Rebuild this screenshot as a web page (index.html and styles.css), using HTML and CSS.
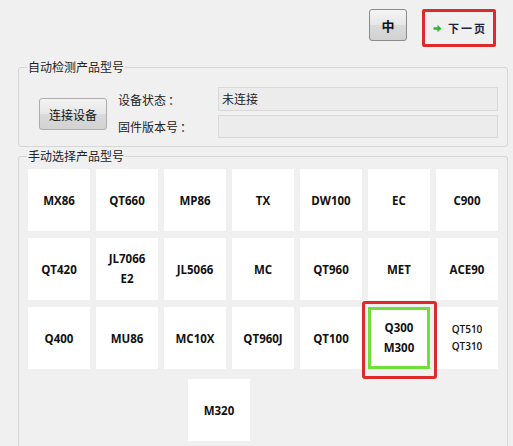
FILE: index.html
```html
<!DOCTYPE html>
<html lang="zh">
<head>
<meta charset="utf-8">
<title>产品型号</title>
<link rel="stylesheet" href="styles.css">
</head>
<body>
<div class="top">
  <button class="btn lang">中</button>
  <div class="next-wrap">
    <button class="next">
      <svg class="arrow" width="9" height="9" viewBox="0 0 9 9"><path d="M0.5 3.2h4V0.8L8.5 4.5 4.5 8.2V5.8h-4z" fill="#2fb52f"/></svg>
      <span>下一页</span>
    </button>
  </div>
</div>

<fieldset class="group auto">
  <legend>自动检测产品型号</legend>
  <div class="auto-body">
    <button class="btn connect">连接设备</button>
    <div class="fields">
      <div class="field"><span class="lbl">设备状态<span class="colon">：</span></span><div class="box">未连接</div></div>
      <div class="field"><span class="lbl">固件版本号<span class="colon">：</span></span><div class="box second"></div></div>
    </div>
  </div>
</fieldset>

<fieldset class="group manual">
  <legend>手动选择产品型号</legend>
  <div class="tiles">
    <div class="tile">MX86</div>
    <div class="tile">QT660</div>
    <div class="tile">MP86</div>
    <div class="tile">TX</div>
    <div class="tile">DW100</div>
    <div class="tile">EC</div>
    <div class="tile">C900</div>
    <div class="tile">QT420</div>
    <div class="tile two">JL7066<br>E2</div>
    <div class="tile">JL5066</div>
    <div class="tile">MC</div>
    <div class="tile">QT960</div>
    <div class="tile">MET</div>
    <div class="tile">ACE90</div>
    <div class="tile">Q400</div>
    <div class="tile">MU86</div>
    <div class="tile">MC10X</div>
    <div class="tile">QT960J</div>
    <div class="tile">QT100</div>
    <div class="tile two selected">Q300<br>M300<span class="hl"></span></div>
    <div class="tile small">QT510<br>QT310</div>
  </div>
  <div class="last-row">
    <div class="tile">M320</div>
  </div>
</fieldset>
</body>
</html>
```

FILE: styles.css
```css
html, body {
  margin: 0;
  padding: 0;
  background: #f0f0f0;
  width: 513px;
  height: 446px;
  overflow: hidden;
  font-family: "Noto Sans CJK SC", "Noto Sans", sans-serif;
  font-size: 12px;
  color: #1a1a1a;
}

.top {
  display: flex;
  justify-content: flex-end;
  align-items: flex-start;
  padding: 9px 17px 0 0;
  height: 47px;
  box-sizing: border-box;
  gap: 15px;
}

.btn {
  font-family: "Noto Sans CJK SC", sans-serif;
  border: 1px solid #adadad;
  border-radius: 3px;
  background: linear-gradient(#f4f4f4, #e6e6e6 50%, #dadada 51%, #d2d2d2);
  color: #111;
  padding: 0;
  margin: 0;
}

.lang {
  width: 38px;
  height: 32px;
  font-weight: bold;
  font-size: 13px;
  border-color: #8a8a8a;
}

.next-wrap {
  width: 74px;
  height: 38px;
  border: 3px solid #dd2a2a;
  border-radius: 2px;
  box-sizing: border-box;
}

.next {
  width: 100%;
  height: 100%;
  border: 0;
  background: #f0f0f0;
  display: flex;
  align-items: center;
  padding: 0 0 0 8px;
  gap: 6px;
  font-family: "Noto Sans CJK SC", sans-serif;
  font-size: 11px;
  font-weight: bold;
  color: #1c2340;
  letter-spacing: 2px;
}

.arrow { display: block; }

.group {
  margin: 0 5px 0 18px;
  padding: 0;
  border: 1px solid #d6d6d6;
  border-radius: 3px;
  box-sizing: border-box;
  width: 490px;
  min-width: 0;
}

.group legend {
  padding: 0 1px;
  margin-left: 8px;
  font-size: 12px;
  line-height: 14px;
  color: #222;
}

.auto {
  margin-top: 13px;
  height: 87px;
}

.auto-body {
  display: flex;
  align-items: flex-start;
  padding: 13px 0 0 20px;
}

.connect {
  width: 68px;
  height: 32px;
  margin-top: 11px;
  font-size: 12px;
}

.fields {
  margin-left: 11px;
  display: flex;
  flex-direction: column;
  gap: 4px;
}

.field {
  display: flex;
  align-items: center;
}

.lbl {
  width: 100px;
  font-size: 12px;
  color: #222;
}

.colon { margin-left: 2px; }

.box {
  width: 280px;
  height: 24px;
  box-sizing: border-box;
  border: 1px solid #d9d9d9;
  background: #ececec;
  padding: 0 3px;
  line-height: 22px;
  font-size: 12px;
  color: #222;
}

.box.second { height: 23px; }

.manual {
  margin-top: 2px;
  height: 300px;
}

.tiles {
  display: grid;
  grid-template-columns: repeat(7, 62px);
  grid-auto-rows: 62px;
  column-gap: 6px;
  row-gap: 7px;
  padding: 6px 0 0 9px;
}

.tile {
  background: #fff;
  width: 62px;
  height: 62px;
  display: flex;
  align-items: center;
  justify-content: center;
  text-align: center;
  font-family: "Open Sans", "Noto Sans", sans-serif;
  font-weight: bold;
  font-size: 11.5px;
  color: #111;
  box-sizing: border-box;
}

.tile.two { line-height: 20px; }

.tile.small {
  font-size: 10px;
  font-weight: 600;
  line-height: 17px;
}

.selected {
  position: relative;
  border: 3px solid #6fe03a;
}

.hl {
  position: absolute;
  left: -9px;
  top: -9px;
  width: 75px;
  height: 78px;
  border: 3px solid #dd2a2a;
  border-radius: 3px;
  box-sizing: border-box;
}

.last-row {
  display: flex;
  padding: 10px 0 0 169px;
}
```
